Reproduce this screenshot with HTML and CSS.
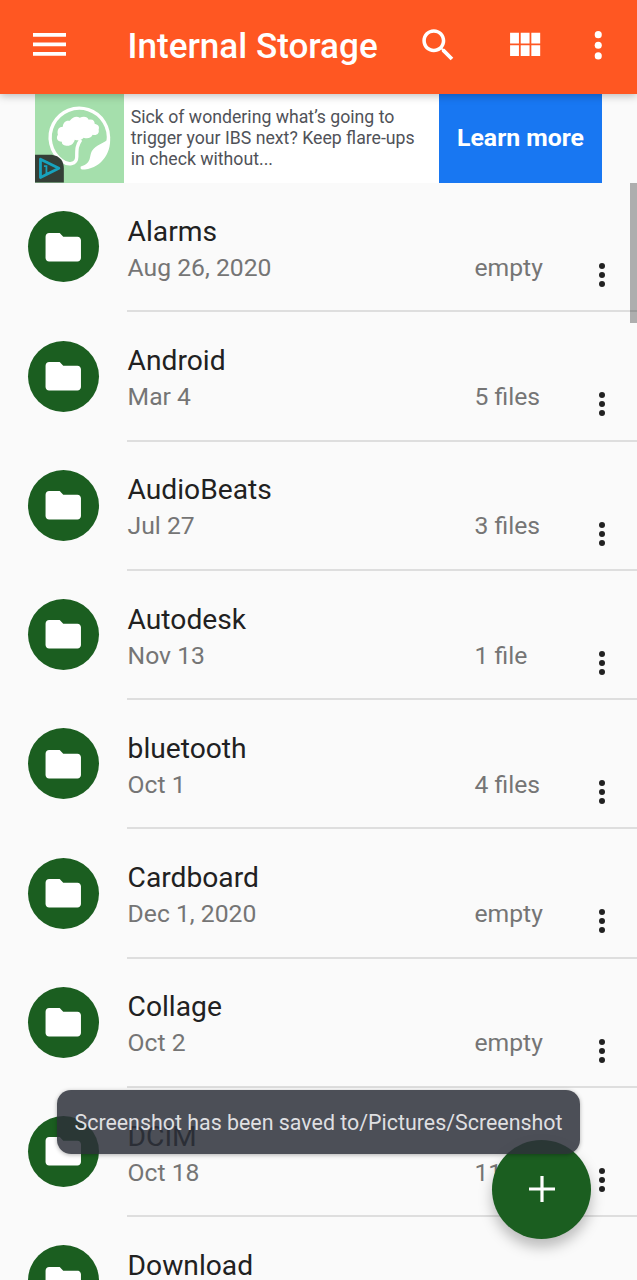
FILE: index.html
```html
<!DOCTYPE html>
<html lang="en">
<head>
  <meta charset="UTF-8">
  <meta name="viewport" content="width=device-width, initial-scale=1.0">
  <title>Internal Storage</title>
  <link rel="stylesheet" href="styles.css">
</head>
<body>
  <svg class="sprite">
    <symbol id="folder" viewBox="0 0 24 24">
      <path d="M10 4H4c-1.100 0-1.990.9-1.990 2L2 18c0 1.100.9 2 2 2h16c1.100 0 2-.9 2-2V8c0-1.100-.9-2-2-2h-8l-2-2z"/>
    </symbol>
    <symbol id="more" viewBox="0 0 24 24">
      <circle cx="12" cy="6" r="2"/>
      <circle cx="12" cy="12" r="2"/>
      <circle cx="12" cy="18" r="2"/>
    </symbol>
  </svg>

  <header class="toolbar">
    <svg class="menu-icon" viewBox="0 0 33 23">
      <path d="M0 0h33v3.700H0zM0 9.500h33v3.700H0zM0 19h33v3.700H0z"/>
    </svg>
    <h1>Internal Storage</h1>
    <svg class="icon search-icon" viewBox="0 0 24 24">
      <path d="M15.500 14h-.79l-.28-.27C15.410 12.590 16 11.110 16 9.500 16 5.910 13.090 3 9.500 3S3 5.910 3 9.500 5.910 16 9.500 16c1.610 0 3.090-.59 4.230-1.570l.27.28v.79l5 4.990L20.490 19l-4.990-5zm-6 0C7.010 14 5 11.990 5 9.500S7.010 5 9.500 5 14 7.010 14 9.500 11.990 14 9.500 14z"/>
    </svg>
    <svg class="icon grid-icon" viewBox="0 0 24 24">
      <path d="M4 11h5V5H4v6zm0 7h5v-6H4v6zm6 0h5v-6h-5v6zm6 0h5v-6h-5v6zm-6-7h5V5h-5v6zm6-6v6h5V5h-5z"/>
    </svg>
    <svg class="icon"><use href="#more"/></svg>
  </header>

  <div class="ad">
    <div class="ad-logo">
      <svg viewBox="0 0 89 89">
        <path d="M73.500 48A29.300 29.300 0 1 0 27 67C33 72 42 71 42 63 42 55 42 52 46 46" fill="none" stroke="#fff" stroke-width="3.400"/>
        <path d="M33 52c-4 0-6-1-6-4-5 0-6-4-4-7-1-5 1-8 5-8 0-4 3-7 7-6 3-4 7-5 10-3 4-2 8-1 9 2 4-1 6 1 6 4 4 1 5 3 4 6 1 4-2 6-6 5-2 4-6 4-9 3-3 3-6 3-9 2-1 4-4 6-7 6z" fill="#fff"/>
        <path d="M75.500 43C72 49 64 50 59 55 53 61 59 69 46 73q-1 2 1 3C65 76 77 61 75.500 43z" fill="#fff"/>
        <path d="M0 61h17q12 2 12 14v14H0z" fill="#343f37"/>
        <path d="M5.500 65.500v18.500L24 74.700z" fill="none" stroke="#17a2bd" stroke-width="2.800" stroke-linejoin="round"/>
        <path d="M9 72.500h2.500v7h2.500M10.300 68.500h2.400" fill="none" stroke="#17a2bd" stroke-width="1.800"/>
      </svg>
    </div>
    <p>Sick of wondering what’s going to<br>trigger your IBS next? Keep flare-ups<br>in check without...</p>
    <button>Learn more</button>
  </div>

  <div class="scrollbar"></div>

  <ul class="files">
    <li>
      <span class="folder"><svg><use href="#folder"/></svg></span>
      <div class="row">
        <div class="info"><h2>Alarms</h2><p>Aug 26, 2020</p></div>
        <span class="count">empty</span>
        <svg class="more"><use href="#more"/></svg>
      </div>
    </li>
    <li>
      <span class="folder"><svg><use href="#folder"/></svg></span>
      <div class="row">
        <div class="info"><h2>Android</h2><p>Mar 4</p></div>
        <span class="count">5 files</span>
        <svg class="more"><use href="#more"/></svg>
      </div>
    </li>
    <li>
      <span class="folder"><svg><use href="#folder"/></svg></span>
      <div class="row">
        <div class="info"><h2>AudioBeats</h2><p>Jul 27</p></div>
        <span class="count">3 files</span>
        <svg class="more"><use href="#more"/></svg>
      </div>
    </li>
    <li>
      <span class="folder"><svg><use href="#folder"/></svg></span>
      <div class="row">
        <div class="info"><h2>Autodesk</h2><p>Nov 13</p></div>
        <span class="count">1 file</span>
        <svg class="more"><use href="#more"/></svg>
      </div>
    </li>
    <li>
      <span class="folder"><svg><use href="#folder"/></svg></span>
      <div class="row">
        <div class="info"><h2>bluetooth</h2><p>Oct 1</p></div>
        <span class="count">4 files</span>
        <svg class="more"><use href="#more"/></svg>
      </div>
    </li>
    <li>
      <span class="folder"><svg><use href="#folder"/></svg></span>
      <div class="row">
        <div class="info"><h2>Cardboard</h2><p>Dec 1, 2020</p></div>
        <span class="count">empty</span>
        <svg class="more"><use href="#more"/></svg>
      </div>
    </li>
    <li>
      <span class="folder"><svg><use href="#folder"/></svg></span>
      <div class="row">
        <div class="info"><h2>Collage</h2><p>Oct 2</p></div>
        <span class="count">empty</span>
        <svg class="more"><use href="#more"/></svg>
      </div>
    </li>
    <li>
      <span class="folder"><svg><use href="#folder"/></svg></span>
      <div class="row">
        <div class="info"><h2>DCIM</h2><p>Oct 18</p></div>
        <span class="count">11</span>
        <svg class="more"><use href="#more"/></svg>
      </div>
    </li>
    <li>
      <span class="folder"><svg><use href="#folder"/></svg></span>
      <div class="row">
        <div class="info"><h2>Download</h2></div>
      </div>
    </li>
  </ul>

  <button class="fab" aria-label="Add">
    <svg viewBox="0 0 26 26"><path d="M11.400 0h3.200v11.400H26v3.200H14.600V26h-3.200V14.600H0v-3.200h11.400z"/></svg>
  </button>

  <div class="toast">Screenshot has been saved to/Pictures/Screenshot</div>
</body>
</html>
```
FILE: styles.css
```css
* {
  margin: 0;
  padding: 0;
  box-sizing: border-box;
  font-family: Roboto, sans-serif;
}

body {
  position: relative;
  width: 637px;
  height: 1280px;
  overflow: hidden;
  background-color: #fafafa;
}

svg {
  display: block;
}

.sprite {
  display: none;
}

/* top bar */
.toolbar {
  position: relative;
  z-index: 1;
  display: flex;
  align-items: center;
  height: 94px;
  padding: 0 18px 4.4px 33px;
  background-color: #ff5722;
  box-shadow: 0 2px 8px rgba(0, 0, 0, 0.25);
  fill: #fff;
}

.toolbar h1 {
  flex: 1;
  margin-top: 2px;
  font-size: 35.1px;
  font-weight: 500;
  color: #fff;
  white-space: nowrap;
}

.menu-icon {
  width: 33px;
  height: 23px;
  margin-right: 61.5px;
}

.icon {
  width: 42.5px;
  height: 42.5px;
}

.search-icon {
  margin-right: 43px;
}

.grid-icon {
  margin-right: 31.5px;
}

/* ad banner */
.ad {
  display: flex;
  width: 566.5px;
  height: 89px;
  margin-left: 35.3px;
  background-color: #fff;
}

.ad-logo {
  width: 88.5px;
  background-color: #a5dfac;
}

.ad p {
  flex: 1;
  padding: 13px 0 0 7px;
  font-size: 17.7px;
  line-height: 21.2px;
  color: #505258;
  white-space: nowrap;
}

.ad button {
  width: 162.5px;
  padding-bottom: 2px;
  border: none;
  background-color: #1877f2;
  font-size: 24.8px;
  font-weight: 700;
  color: #fff;
}

/* file list */
.files {
  height: 1097px;
  overflow: hidden;
  list-style: none;
}

.files li {
  display: flex;
  height: 129.28px;
  padding-left: 28px;
}

.folder {
  display: flex;
  align-items: center;
  justify-content: center;
  width: 71px;
  height: 71px;
  margin: 28.3px 28px 0 0;
  border-radius: 50%;
  background-color: #1b5e20;
  fill: #fff;
}

.folder svg {
  width: 42.5px;
  height: 42.5px;
}

.row {
  flex: 1;
  display: flex;
  border-bottom: 2px solid #dedede;
}

.info {
  flex: 1;
  padding: 30.8px 0 0 0.6px;
}

.info h2 {
  font-size: 28.2px;
  font-weight: 400;
  line-height: 36px;
  color: #212121;
}

.info p,
.count {
  font-size: 24.7px;
  line-height: 36px;
  color: #757575;
}

.count {
  width: 109px;
  padding-top: 66.8px;
}

.more {
  width: 36px;
  height: 36px;
  margin: 74px 17.5px 0 0;
  fill: #212121;
}

.scrollbar {
  position: absolute;
  top: 183px;
  right: 0;
  width: 7px;
  height: 140px;
  background-color: rgba(0, 0, 0, 0.3);
}

/* floating items */
.fab {
  position: absolute;
  left: 492px;
  top: 1139.5px;
  display: flex;
  align-items: center;
  justify-content: center;
  width: 99px;
  height: 99px;
  border: none;
  border-radius: 50%;
  background-color: #1b5e20;
  box-shadow: 0 8px 14px rgba(0, 0, 0, 0.26);
  fill: #fff;
}

.fab svg {
  width: 26px;
  height: 26px;
}

.toast {
  position: absolute;
  left: 57px;
  top: 1090px;
  width: 523px;
  height: 64px;
  border-radius: 14px;
  background-color: rgba(45, 48, 58, 0.85);
  box-shadow: 0 1px 4px rgba(0, 0, 0, 0.3);
  font-size: 21.4px;
  line-height: 66px;
  text-align: center;
  color: #dfdfe1;
  white-space: nowrap;
}
```
